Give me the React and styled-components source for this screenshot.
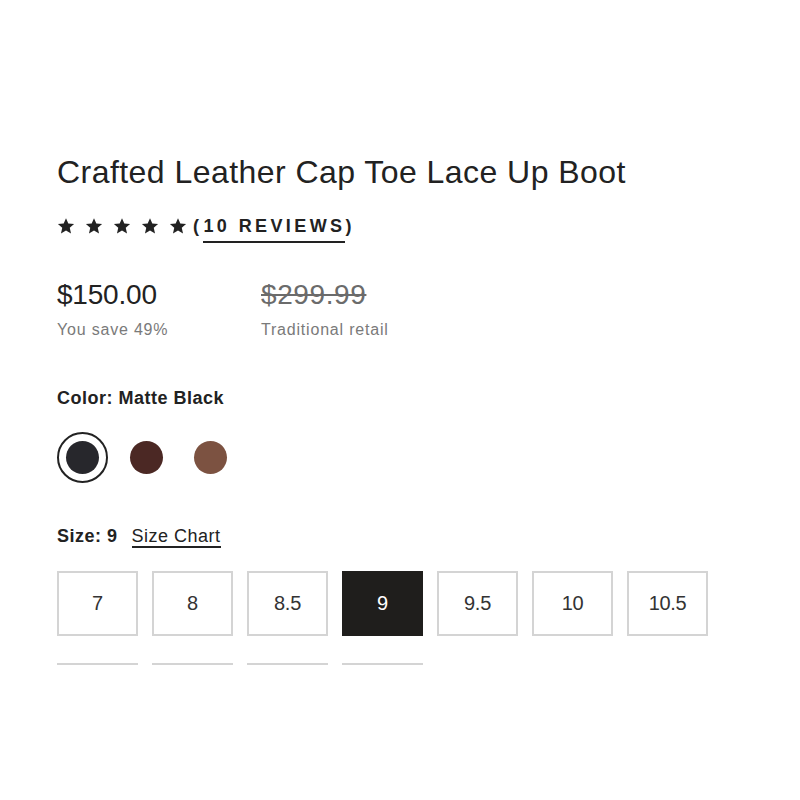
import React, { useState } from 'react';
import styled, { createGlobalStyle } from 'styled-components';

const GlobalStyle = createGlobalStyle`
  body {
    margin: 0;
    background: #fff;
    font-family: "Liberation Sans", Arial, sans-serif;
    color: #222;
  }
`;

const colors = [
  { id: 'black', label: 'Matte Black', hex: '#27272c' },
  { id: 'brown', label: 'Dark Brown', hex: '#4b2824' },
  { id: 'tan', label: 'Cognac', hex: '#7c5241' },
];

const sizes = ['7', '8', '8.5', '9', '9.5', '10', '10.5', '11', '11.5', '12', '13'];

const Page = styled.div`
  padding: 152px 0 0 57px;
  width: 651px;
`;

const Title = styled.h1`
  margin: 0;
  font-size: 32px;
  font-weight: 400;
  line-height: 40px;
  letter-spacing: 0.45px;
  color: #222;
`;

const RatingRow = styled.div`
  display: flex;
  align-items: center;
  margin-top: 19px;
  height: 30px;
`;

const Stars = styled.div`
  display: flex;
  gap: 10px;
  margin-right: 6px;
`;

const Reviews = styled.span`
  font-size: 18px;
  font-weight: 700;
  letter-spacing: 3.4px;
  color: #222;
`;

const ReviewLink = styled.a`
  color: inherit;
  text-decoration: none;
  border-bottom: 2px solid #222;
  padding-bottom: 5px;
  margin-left: 1px;
`;

const PriceRow = styled.div`
  display: grid;
  grid-template-columns: 204px auto;
  margin-top: 38px;
`;

const Price = styled.div`
  font-size: 28px;
  line-height: 32px;
  color: ${({ old }) => (old ? '#6b6b6b' : '#222')};
  text-decoration: ${({ old }) => (old ? 'line-through' : 'none')};
  letter-spacing: ${({ old }) => (old ? '0.6px' : '-0.2px')};
`;

const PriceNote = styled.div`
  font-size: 16px;
  line-height: 20px;
  margin-top: 9px;
  color: #7a7a7a;
  letter-spacing: 0.8px;
`;

const Label = styled.div`
  font-size: 18px;
  line-height: 20px;
  font-weight: 700;
  letter-spacing: 0.5px;
  color: #222;
  display: flex;
  align-items: baseline;
  gap: 14px;
`;

const ColorLabel = styled(Label)`
  margin-top: 48px;
`;

const Swatches = styled.div`
  display: flex;
  gap: 13px;
  margin-top: 24px;
`;

const SwatchButton = styled.button`
  width: 51px;
  height: 51px;
  border-radius: 50%;
  border: 2px solid ${({ active }) => (active ? '#222' : 'transparent')};
  background: #fff;
  padding: 0;
  display: flex;
  align-items: center;
  justify-content: center;
  cursor: pointer;
`;

const SwatchDot = styled.span`
  width: 33px;
  height: 33px;
  border-radius: 50%;
  background: ${({ hex }) => hex};
`;

const SizeLabel = styled(Label)`
  margin-top: 43px;
`;

const SizeChart = styled.a`
  font-weight: 400;
  color: #222;
  text-decoration: none;
  border-bottom: 2px solid #222;
`;

const SizeGrid = styled.div`
  display: grid;
  grid-template-columns: repeat(7, 1fr);
  column-gap: 14px;
  row-gap: 27px;
  margin-top: 23px;
  height: 94px;
  overflow: hidden;
`;

const SizeBox = styled.button`
  height: 65px;
  border: 2px solid ${({ active }) => (active ? '#1f1e1c' : '#d4d4d4')};
  background: ${({ active }) => (active ? '#1f1e1c' : '#fff')};
  color: ${({ active }) => (active ? '#fff' : '#333')};
  font-family: inherit;
  font-size: 20px;
  letter-spacing: -0.3px;
  cursor: pointer;
`;

const Star = () => (
  <svg width="18" height="18" viewBox="0 0 24 24">
    <path
      fill="#222"
      d="M12 1.5l3.1 7.1 7.7.7-5.8 5.1 1.7 7.6L12 18l-6.7 4 1.7-7.6L1.2 9.3l7.7-.7z"
    />
  </svg>
);

const App = () => {
  const [color, setColor] = useState('black');
  const [size, setSize] = useState('9');
  const current = colors.find((c) => c.id === color);

  return (
    <Page>
      <GlobalStyle />
      <Title>Crafted Leather Cap Toe Lace Up Boot</Title>
      <RatingRow>
        <Stars>
          {[0, 1, 2, 3, 4].map((i) => (
            <Star key={i} />
          ))}
        </Stars>
        <Reviews>
          (<ReviewLink href="#reviews">10 REVIEWS</ReviewLink>)
        </Reviews>
      </RatingRow>

      <PriceRow>
        <div>
          <Price>$150.00</Price>
          <PriceNote>You save 49%</PriceNote>
        </div>
        <div>
          <Price old>$299.99</Price>
          <PriceNote>Traditional retail</PriceNote>
        </div>
      </PriceRow>

      <ColorLabel>
        <span>Color: {current.label}</span>
      </ColorLabel>
      <Swatches>
        {colors.map((c) => (
          <SwatchButton
            key={c.id}
            active={c.id === color}
            onClick={() => setColor(c.id)}
            aria-label={c.label}
          >
            <SwatchDot hex={c.hex} />
          </SwatchButton>
        ))}
      </Swatches>

      <SizeLabel>
        <span>Size: {size}</span>
        <SizeChart href="#size-chart">Size Chart</SizeChart>
      </SizeLabel>
      <SizeGrid>
        {sizes.map((s) => (
          <SizeBox key={s} active={s === size} onClick={() => setSize(s)}>
            {s}
          </SizeBox>
        ))}
      </SizeGrid>
    </Page>
  );
};

export default App;
